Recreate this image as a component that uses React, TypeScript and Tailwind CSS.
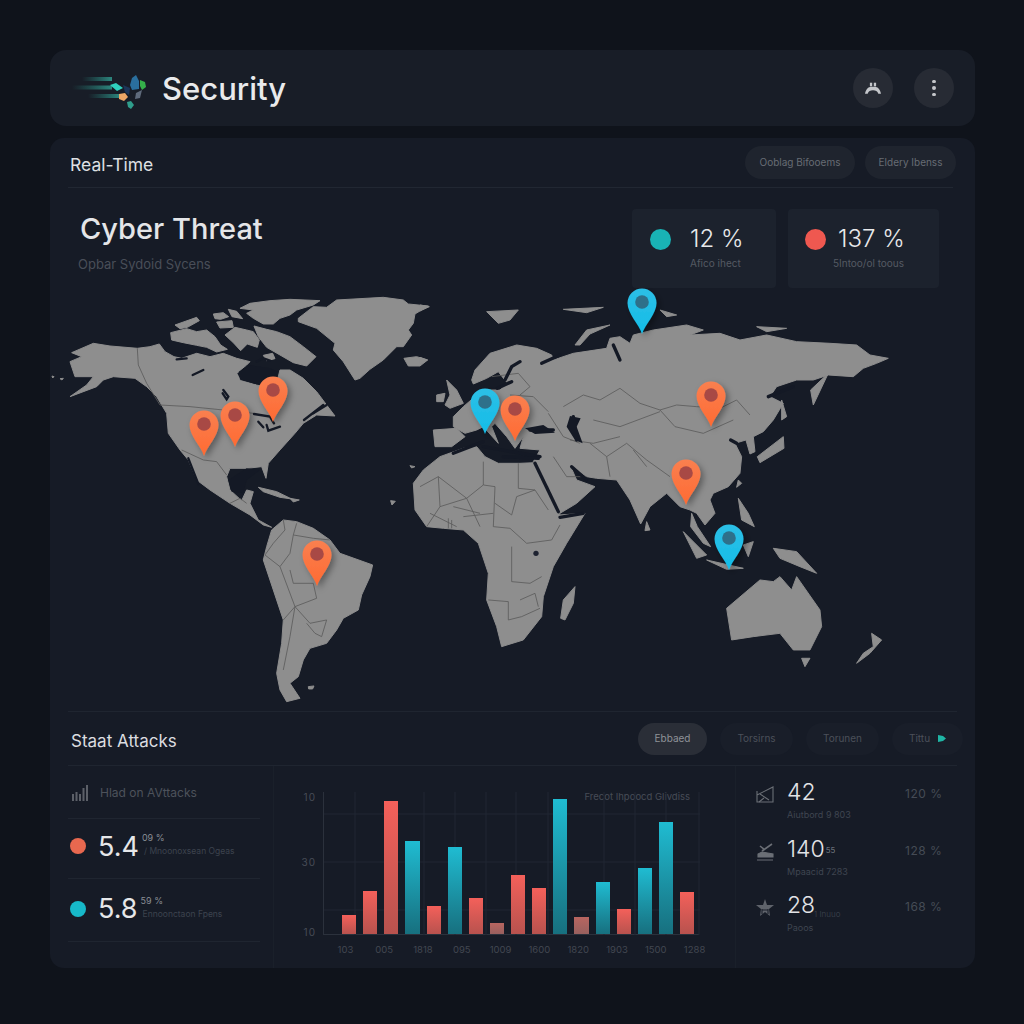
const font = "font-['Inter','Liberation_Sans',sans-serif]";

const bars = [
  { h: 19, c: "r" }, { h: 43, c: "r" }, { h: 133, c: "r" }, { h: 93, c: "t" }, { h: 28, c: "r" }, { h: 87, c: "t" },
  { h: 36, c: "r" }, { h: 11, c: "m" }, { h: 59, c: "r" }, { h: 46, c: "r" }, { h: 135, c: "t" }, { h: 17, c: "m" },
  { h: 52, c: "t" }, { h: 25, c: "r" }, { h: 66, c: "t" }, { h: 112, c: "t" }, { h: 42, c: "r" },
];

const barClass: Record<string, string> = {
  r: "bg-gradient-to-b from-[#f4605a] to-[#b8524e]",
  t: "bg-gradient-to-b from-[#1fbcd2] to-[#17707f]",
  m: "bg-gradient-to-b from-[#b86560] to-[#98605e]",
};

const pins = [
  { x: 204, y: 425, k: "o" }, { x: 235, y: 416, k: "o" }, { x: 273, y: 391, k: "o" }, { x: 317, y: 555, k: "o" },
  { x: 485, y: 403, k: "c" }, { x: 515, y: 410, k: "o" }, { x: 711, y: 396, k: "o" }, { x: 686, y: 474, k: "o" },
  { x: 729, y: 539, k: "c" }, { x: 642, y: 303, k: "c" },
];

// traced from the picture, coordinates are 3x crops
const westLand = [
  "M65,188 L130,160 L180,168 L262,175 L300,170 L328,162 L345,185 L372,200 L395,205 L440,190 L480,200 L520,190 L560,205 L600,215 L590,225 L565,245 L570,270 L620,285 L650,292 L680,280 L690,240 L720,240 L760,265 L800,305 L830,345 L855,378 L800,375 L760,400 L735,430 L690,480 L655,520 L648,565 L635,530 L590,535 L540,535 L530,560 L540,600 L575,632 L590,600 L610,605 L600,640 L625,690 L665,712 L640,705 L600,675 L540,640 L480,600 L440,570 L415,510 L390,480 L355,430 L350,370 L320,320 L290,290 L255,265 L190,260 L160,270 L140,290 L60,320 L110,285 L130,260 L75,260 L60,215 L95,200 Z",
  "M612,108 L650,118 L680,125 L720,140 L760,170 L798,200 L770,228 L730,218 L690,195 L650,172 L625,140 Z",
  "M362,128 L410,116 L440,125 L470,120 L495,140 L512,165 L532,178 L500,186 L470,172 L440,166 L400,158 L365,150 Z",
  "M375,105 L440,82 L448,92 L412,112 L390,116 Z",
  "M490,72 L520,68 L536,80 L512,88 L495,86 Z",
  "M500,96 L546,92 L550,112 L510,114 Z",
  "M535,58 L560,64 L578,86 L546,80 Z",
  "M600,40 L660,32 L720,28 L810,32 L790,45 L740,60 L720,75 L690,85 L670,102 L640,102 L610,85 L590,70 L610,60 L570,55 Z",
  "M555,112 L590,120 L610,125 L628,150 L622,172 L592,162 L572,182 L550,158 L525,135 Z",
  "M640,196 L668,190 L675,206 L650,212 Z",
  "M745,85 L790,50 L830,52 L860,30 L1000,22 L1060,30 L1075,42 L1135,48 L1095,72 L1090,100 L1075,120 L1085,135 L1060,170 L1040,170 L1000,210 L960,238 L930,265 L915,270 L880,215 L850,180 L855,160 L800,115 L745,95 Z",
  "M1062,205 L1100,200 L1133,210 L1110,228 L1075,228 Z",
  "M665,720 L700,690 L740,695 L790,715 L840,750 L870,790 L968,825 L960,860 L935,915 L925,960 L880,985 L860,1020 L830,1060 L780,1075 L760,1110 L745,1160 L720,1180 L750,1225 L710,1235 L690,1200 L680,1150 L695,1060 L700,990 L670,900 L640,810 L650,770 Z",
  "M625,592 L680,605 L725,627 L690,622 L640,605 Z",
  "M720,625 L748,630 L730,636 Z",
  "M775,1190 L792,1188 L788,1197 L776,1197 Z",
  "M6,258 L12,260 L8,264 Z",
  "M30,266 L40,265 L36,270 Z",
  "M1080,527 L1095,530 L1085,534 Z",
  "M1022,632 L1036,634 L1026,645 Z",
];

const westLines = [
  "M262,175 L265,225 L290,280 L330,345 L420,350 L520,360 L610,370",
  "M395,480 L460,510 L500,515 L530,555",
  "M540,640 L570,625 L590,640",
  "M700,690 L705,720 L670,760 L645,795 L690,830 L735,950 L700,990",
  "M740,700 L730,735 L790,745 L840,750",
  "M690,830 L720,790 L730,735",
  "M735,950 L800,925 L790,880 L730,880 L720,840",
  "M735,950 L780,1000 L830,990 L815,1040 L795,1030 L770,1000",
  "M735,950 L720,1040 L700,1140",
];

const westDark = [
  "M415,505 L445,582",
  "M520,300 L535,320 L530,328 L518,310",
  "M612,372 L660,380 L672,400",
  "M625,395 L640,412",
  "M650,405 L655,422 L690,410",
  "M762,390 L820,345",
  "M380,208 L410,205",
  "M428,255 L460,240",
  "M620,215 L640,205 L660,212",
  "M790,370 L830,345",
];

const eastLand = [
  "M-20,610 L10,570 L60,530 L130,505 L170,500 L195,530 L235,550 L300,550 L345,548 L380,620 L420,705 L495,700 L440,790 L400,860 L370,950 L365,1010 L310,1080 L245,1100 L230,1040 L200,960 L205,880 L175,790 L130,750 L70,745 L20,740 L-15,690 Z",
  "M40,450 L110,445 L135,470 L95,500 L45,500 Z",
  "M155,300 L165,270 L210,220 L290,195 L350,205 L395,225 L400,240 L460,220 L560,205 L570,175 L600,170 L630,190 L640,165 L700,150 L800,135 L850,150 L810,165 L900,160 L960,180 L1040,165 L1130,185 L1230,190 L1310,195 L1350,225 L1405,235 L1370,250 L1330,265 L1300,290 L1225,285 L1180,300 L1130,300 L1070,320 L1050,350 L1090,370 L1060,420 L1030,455 L1000,470 L1005,515 L990,522 L978,480 L945,490 L965,530 L960,580 L925,620 L880,640 L870,660 L885,700 L855,735 L830,700 L810,690 L780,680 L740,640 L690,680 L662,732 L630,660 L590,600 L530,595 L500,590 L450,555 L470,600 L525,620 L470,670 L420,700 L385,620 L340,545 L360,510 L300,505 L310,470 L285,505 L260,470 L225,430 L215,440 L235,490 L190,440 L170,450 L135,460 L100,440 L100,410 L130,380 L165,350 L200,330 L240,330 L262,310 L235,275 L200,295 L160,312 Z",
  "M815,700 L832,740 L872,800 L850,790 L812,740 Z",
  "M80,300 L110,330 L130,370 L90,385 L75,375 L90,345 Z",
  "M50,345 L75,340 L70,365 L50,365 Z",
  "M200,95 L295,90 L270,120 L235,130 Z",
  "M465,195 L500,150 L570,135 L510,162 L480,195 Z",
  "M430,88 L550,82 L500,98 Z",
  "M720,90 L770,105 L740,110 Z",
  "M1010,140 L1100,145 L1040,155 Z",
  "M1225,280 L1180,375 L1172,330 Z",
  "M1085,360 L1100,410 L1085,420 Z",
  "M1012,530 L1090,470 L1092,505 L1020,548 Z",
  "M955,600 L965,610 L950,622 Z",
  "M955,655 L985,700 L1003,740 L965,720 Z",
  "M790,755 L860,825 L830,835 Z",
  "M860,840 L970,865 L920,868 Z",
  "M970,795 L1000,785 L985,830 Z",
  "M1060,805 L1130,815 L1190,880 L1140,860 L1080,835 Z",
  "M920,985 L1020,900 L1060,905 L1080,890 L1115,930 L1130,890 L1200,990 L1205,1040 L1170,1110 L1120,1110 L1080,1060 L1000,1070 L935,1080 Z",
  "M1145,1135 L1170,1135 L1155,1160 Z",
  "M1355,1060 L1385,1080 L1350,1120 L1310,1150 L1330,1120 L1360,1100 Z",
  "M465,920 L460,970 L435,1020 L422,1015 L430,960 Z",
  "M680,725 L690,750 L675,752 Z",
  "M0,75 L28,80 L0,93 Z",
  "M0,232 L22,240 L0,252 Z",
];

const eastLines = [
  "M430,380 L490,345 L540,360 L600,325 L660,370 L720,390 L770,375 L830,380 L900,385 L950,360 L990,405",
  "M720,390 L765,440 L850,460 L940,420",
  "M520,420 L600,440 L720,395",
  "M510,490 L560,530 L620,490 L680,540 L750,590",
  "M560,530 L570,590",
  "M640,510 L680,560",
  "M450,480 L520,490 L600,470",
  "M55,590 L140,655 L190,615 L225,620 L220,740",
  "M190,545 L190,615",
  "M295,550 L295,625 L345,630",
  "M225,670 L275,705 L290,650 L345,630 L385,690",
  "M0,620 L55,590 L60,680 L20,740",
  "M60,680 L140,655 L180,740",
  "M220,740 L270,745 L320,790 L395,780 L420,735",
  "M275,800 L275,905 L330,910 L365,890",
  "M205,960 L265,965 L265,1020 L305,1010 L360,985",
  "M300,960 L345,940 L355,980",
  "M385,400 L430,470 L480,490",
  "M400,530 L440,590 L500,590",
  "M215,290 L295,280 L330,320 L300,345",
  "M270,345 L340,350 L385,395",
  "M30,700 L110,740 M85,715 L85,745 M95,720 L95,745",
  "M100,680 L180,700 M130,710 L220,700",
];

const eastDark = [
  "M345,550 L415,695",
  "M420,712 L490,700",
  "M100,520 L190,485 M190,500 L360,530",
  "M250,530 L355,535",
  "M255,300 L275,260 L300,245",
  "M232,325 L275,305",
  "M330,450 L400,450",
  "M460,410 L470,480",
  "M455,560 L500,600",
  "M580,195 L600,240",
  "M365,250 L420,225",
  "M932,480 L950,490",
  "M1045,350 L1120,320",
];

function Pin({ x, y, k }: { x: number; y: number; k: string }) {
  const orange = k === "o";
  return (
    <g transform={`translate(${x} ${y})`} filter="url(#pinShadow)">
      <path
        d="M0,31 C-3,21 -14.5,11 -14.5,0 A14.5,14.5 0 1 1 14.5,0 C14.5,11 3,21 0,31 Z"
        fill={orange ? "url(#pinOrange)" : "url(#pinCyan)"}
      />
      <circle cx="0" cy="-1" r="6.8" fill={orange ? "#a84a44" : "#2d6f8a"} />
    </g>
  );
}

function WorldMap() {
  return (
    <svg viewBox="50 290 925 420" className="block w-[925px] h-[420px] overflow-visible">
      <defs>
        <linearGradient id="pinOrange" x1="0" y1="0" x2="0" y2="1">
          <stop offset="0" stopColor="#f98050" />
          <stop offset="1" stopColor="#ff6a32" />
        </linearGradient>
        <linearGradient id="pinCyan" x1="0" y1="0" x2="0" y2="1">
          <stop offset="0" stopColor="#2cbfe6" />
          <stop offset="1" stopColor="#14bde8" />
        </linearGradient>
        <filter id="pinShadow" x="-60%" y="-40%" width="220%" height="180%">
          <feDropShadow dx="3" dy="3" stdDeviation="3" floodColor="#000" floodOpacity="0.35" />
        </filter>
      </defs>
      <g transform="translate(50 290) scale(0.3333)">
        {westLand.map((d) => (
          <path key={d} d={d} fill="#8e8e8e" stroke="#8e8e8e" strokeWidth="3" strokeLinejoin="round" />
        ))}
        {westLines.map((d) => (
          <path key={d} d={d} fill="none" stroke="#5c5c5c" strokeWidth="2.5" />
        ))}
        {westDark.map((d) => (
          <path key={d} d={d} fill="none" stroke="#141925" strokeWidth="7" strokeLinecap="round" />
        ))}
        <path d="M562,250 L600,225 L660,235 L685,245 L665,285 L620,283 L572,270 Z" fill="#141925" />
        <path d="M535,570 L590,535 L630,540 L590,570 L580,610 L545,605 Z" fill="#141925" />
      </g>
      <g transform="translate(420 280) scale(0.3333)">
        {eastLand.map((d) => (
          <path key={d} d={d} fill="#8e8e8e" stroke="#8e8e8e" strokeWidth="3" strokeLinejoin="round" />
        ))}
        {eastLines.map((d) => (
          <path key={d} d={d} fill="none" stroke="#5c5c5c" strokeWidth="2.5" />
        ))}
        {eastDark.map((d) => (
          <path key={d} d={d} fill="none" stroke="#141925" strokeWidth="10" strokeLinecap="round" />
        ))}
        <path d="M315,445 L370,435 L405,458 L345,462 Z" fill="#141925" />
        <path d="M450,408 L482,415 L470,440 L488,490 L465,480 L440,440 Z" fill="#141925" />
        <circle cx="348" cy="820" r="8" fill="#1d2230" />
      </g>
      {pins.map((p) => (
        <Pin key={`${p.x}-${p.y}`} x={p.x} y={p.y} k={p.k} />
      ))}
    </svg>
  );
}

function Logo() {
  return (
    <svg viewBox="0 0 80 40" className="w-[80px] h-[40px] overflow-visible">
      <defs>
        <linearGradient id="speed" x1="0" y1="0" x2="1" y2="0">
          <stop offset="0" stopColor="#2a9d8f" stopOpacity="0" />
          <stop offset="1" stopColor="#35b5a5" stopOpacity="0.7" />
        </linearGradient>
      </defs>
      <rect x="10" y="9" width="30" height="4" fill="url(#speed)" />
      <rect x="0" y="17.5" width="40" height="4" fill="url(#speed)" />
      <rect x="16" y="26" width="32" height="4" fill="url(#speed)" />
      <path d="M38,17 L44,15 L51,20 L45,23 Z" fill="#2fd0bd" />
      <path d="M47,26 L53,25 L56,29 L52,33 L47,31 Z" fill="#eda766" />
      <path d="M51,17 L58,20 L57,27 L53,24 Z" fill="#1c3558" />
      <path d="M60,10 L64,7 L67,13 L67,21 L60,22 L58,17 Z" fill="#2a6f9e" />
      <path d="M68,12 L73,14 L74,19 L70,22 L68,18 Z" fill="#35b04a" />
      <path d="M64,25 L70,22 L68,30 L63,31 Z" fill="#5f6b7c" />
      <path d="M55,34 L59,33 L62,37 L59,41 L56,39 Z" fill="#2f9e8c" />
    </svg>
  );
}

function PairIcon() {
  return (
    <svg viewBox="0 0 18 14" className="w-[16px] h-[13px]" fill="#c4c6ca">
      <path d="M0,13 C1,8 3,6 6,5 L12,5 C15,6 17,8 18,13 L15,13 C14,10 12,9 9,9 C6,9 4,10 3,13 Z" />
      <rect x="5.5" y="0.5" width="2.6" height="4" />
      <rect x="9.9" y="0.5" width="2.6" height="4" />
    </svg>
  );
}

function RowIcon({ kind }: { kind: number }) {
  return (
    <svg viewBox="0 0 18 18" className="w-[18px] h-[18px]" fill="none" stroke="#6b6f76" strokeWidth="1.1">
      {kind === 0 && (
        <>
          <path d="M1,5 V16 H17 V1 L1,9" />
          <path d="M4,8 L13,14 M8,12 L3,16" />
        </>
      )}
      {kind === 1 && (
        <>
          <path d="M1,17 H17 M2,14 H17 V11 L6,9 L2,11 Z" fill="#6b6f76" />
          <path d="M6,8 L16,1 M4,3 L9,7" strokeWidth="1.6" />
        </>
      )}
      {kind === 2 && (
        <>
          <path d="M9,0 L11,6 L18,6 L13,10 L14,17 L9,13 L4,17 L5,10 L0,6 L7,6 Z" fill="#5f636b" stroke="none" />
          <path d="M6,10 V15 M12,10 V15 M6,11 H12" stroke="#1a1f2a" />
        </>
      )}
    </svg>
  );
}

function StatCard({ dot, value, label, width, dotLeft, gap, labelShift }: { dot: string; value: string; label: string; width: string; dotLeft: string; gap: string; labelShift: string }) {
  return (
    <div className={`${width} h-[79px] rounded-[4px] bg-[#1c222d] flex items-start`}>
      <div className={`${dot} ${dotLeft} w-[21px] h-[21px] rounded-full mt-[20px]`} />
      <div className={`${gap} mt-[16px]`}>
        <div className="text-[24px] leading-[28px] font-light text-[#e8e9eb] whitespace-nowrap">{value}</div>
        <div className={`${labelShift} text-[10px] leading-[12px] mt-[4px] text-[#555a63] whitespace-nowrap`}>{label}</div>
      </div>
    </div>
  );
}

function AttackRow({ dot, value, sup, sub, h }: { dot: string; value: string; sup: string; sub: string; h: string }) {
  return (
    <div className={`${h} flex items-center border-b border-[#1f2530]`}>
      <div className={`${dot} w-[16px] h-[16px] rounded-full ml-[2px]`} />
      <div className="ml-[12px] text-[27px] leading-none font-normal text-[#e6e7e9]">{value}</div>
      <div className="ml-[3px] -mt-[3px]">
        <div className="text-[9px] leading-[11px] text-[#8a8e95]">{sup}</div>
        <div className="text-[8.5px] leading-[12px] mt-[2px] ml-[2px] text-[#3d434e] whitespace-nowrap">{sub}</div>
      </div>
    </div>
  );
}

function ThreatRow({ kind, value, sup, note, sub, side, h }: { kind: number; value: string; sup?: string; note?: string; sub: string; side: string; h: string }) {
  return (
    <div className={`${h} flex items-start`}>
      <div className="mt-[9px] w-[18px]">
        <RowIcon kind={kind} />
      </div>
      <div className="ml-[13px] w-[118px]">
        <div className="text-[23px] leading-[30px] font-light text-[#e2e3e6] relative">
          {value}
          {sup && <sup className="text-[8px] text-[#8a8e95] ml-[1px]">{sup}</sup>}
          {note && <span className="absolute left-[27px] top-[19px] text-[8px] leading-[10px] text-[#3f4550]">{note}</span>}
        </div>
        <div className="text-[9px] leading-[12px] mt-[2px] text-[#3f4550] whitespace-nowrap">{sub}</div>
      </div>
      <div className="mt-[8px] text-[12px] tracking-[0.5px] text-[#454b55] whitespace-nowrap">{side}</div>
    </div>
  );
}

export default function App() {
  return (
    <div className={`${font} w-[1024px] h-[1024px] overflow-hidden bg-[#0f131b] pt-[50px] pl-[50px]`}>
      <header className="w-[925px] h-[76px] rounded-[16px] bg-[#181d27] flex items-center pl-[22px] pr-[21px]">
        <Logo />
        <div className="ml-[10px] mt-[3px] text-[31px] font-medium text-[#e9eaec]">Security</div>
        <div className="ml-auto flex gap-[21px]">
          <div className="w-[40px] h-[40px] rounded-full bg-[#272b34] flex items-center justify-center">
            <PairIcon />
          </div>
          <div className="w-[40px] h-[40px] rounded-full bg-[#272b34] flex flex-col items-center justify-center gap-[3px]">
            <span className="w-[3.5px] h-[3.5px] rounded-full bg-[#c4c6ca]" />
            <span className="w-[3.5px] h-[3.5px] rounded-full bg-[#c4c6ca]" />
            <span className="w-[3.5px] h-[3.5px] rounded-full bg-[#c4c6ca]" />
          </div>
        </div>
      </header>

      <main className="w-[925px] h-[830px] mt-[12px] rounded-[14px] bg-[#161b26]">
        <div className="ml-[18px] mr-[22px] h-[50px] flex items-center border-b border-[#212732]">
          <div className="ml-[2px] mt-[5px] text-[17.5px] text-[#dfe0e3]">Real-Time</div>
          <div className="ml-auto -mr-[3px] flex gap-[10px] text-[10px] text-[#676c74]">
            <div className="w-[110px] h-[33px] rounded-full bg-[#1f242e] flex items-center justify-center">Ooblag Bifooems</div>
            <div className="w-[91px] h-[33px] rounded-full bg-[#1f242e] flex items-center justify-center">Eldery Ibenss</div>
          </div>
        </div>

        <div className="h-[102px] flex pr-[36px]">
          <div className="pl-[30px]">
            <div className="mt-[21px] text-[29px] leading-[40px] font-medium text-[#e4e5e8]">Cyber Threat</div>
            <div className="ml-[-2px] mt-[7px] text-[13px] leading-[16px] text-[#494e58]">Opbar Sydoid Sycens</div>
          </div>
          <div className="ml-auto pt-[21px] flex gap-[12px]">
            <StatCard dot="bg-[#19b3b5]" value="12 %" label="Afico ihect" width="w-[144px]" dotLeft="ml-[18px]" gap="ml-[19px]" labelShift="ml-0" />
            <StatCard dot="bg-[#ef5850]" value="137 %" label="5Intoo/ol toous" width="w-[151px]" dotLeft="ml-[17px]" gap="ml-[12px]" labelShift="-ml-[5px]" />
          </div>
        </div>

        <WorldMap />

        <div className="mx-[18px] mt-[1px] h-[55px] flex items-center border-t border-b border-[#1f2530]">
          <div className="ml-[3px] mt-[6px] text-[17px] text-[#dcdde0]">Staat Attacks</div>
          <div className="ml-auto -mr-[6px] flex gap-[13px] text-[10px] text-[#4b5059]">
            <div className="w-[69px] h-[32px] rounded-full bg-[#2a2e37] text-[#8f9298] flex items-center justify-center">Ebbaed</div>
            <div className="w-[73px] h-[32px] rounded-full bg-[#191e29] flex items-center justify-center">Torsirns</div>
            <div className="w-[73px] h-[32px] rounded-full bg-[#191e29] flex items-center justify-center">Torunen</div>
            <div className="w-[71px] h-[32px] rounded-full bg-[#191e29] flex items-center justify-center gap-[8px]">
              Tittu
              <svg viewBox="0 0 8 7" className="w-[8px] h-[7px]">
                <path d="M0,0 L5,1 L8,3.5 L5,6 L0,7 Z" fill="#1fb5a5" />
              </svg>
            </div>
          </div>
        </div>

        <div className="flex h-[202px]">
          <div className="w-[223px] pl-[18px] pr-[13px]">
            <div className="h-[53px] flex items-center border-b border-[#1f2530]">
              <svg viewBox="0 0 16 16" className="ml-[4px] mt-[2px] w-[16px] h-[16px]" fill="#5c6068">
                <rect x="0" y="9" width="2" height="7" />
                <rect x="3.5" y="7" width="2" height="9" />
                <rect x="7" y="9" width="2" height="7" />
                <rect x="10.5" y="3" width="2" height="13" />
                <rect x="14" y="0" width="2" height="16" />
              </svg>
              <div className="ml-[12px] mt-[2px] text-[12px] text-[#4d525b]">Hlad on AVttacks</div>
            </div>
            <AttackRow dot="bg-[#e8684f]" value="5.4" sup="09 %" sub="/ Mnoonoxsean Ogeas" h="h-[60px] pb-[5px]" />
            <AttackRow dot="bg-[#17b9c9]" value="5.8" sup="59 %" sub="Ennoonctaon Fpens" h="h-[63px] pb-[3px]" />
          </div>

          <div className="w-[462px] border-l border-[#1a202a] pt-[26px] relative">
            <div className="absolute right-[45px] top-[24px] text-[9.5px] text-[#474c56] whitespace-nowrap">Frecot Ihpoocd Glivdiss</div>
            <div className="flex">
              <div className="w-[42px] text-[10px] leading-[10px] text-right text-[#474c56] tracking-[1px]">
                <div>10</div>
                <div className="mt-[55px]">30</div>
                <div className="mt-[60px]">10</div>
              </div>
              <div className="ml-[7px] w-[376px] h-[143px] relative border-l border-b border-[#2b313c] pl-[18px] flex items-end">
                <svg viewBox="0 0 376 143" className="absolute inset-0 w-[376px] h-[143px]" stroke="#212733" fill="none">
                  <path d="M0,22H376M0,70H376M0,118H376" />
                  <path d="M31,0V143M100,0V143M131,0V143M162,0V143M192,0V143M224,0V143M280,0V143M311,0V143M342,0V143M375,0V143" />
                </svg>
                <div className="relative w-[352px] h-[143px] flex items-end gap-[7px]">
                  {bars.map((b, i) => (
                    <div key={i} className={`flex-1 ${barClass[b.c]}`} style={{ height: b.h }} />
                  ))}
                </div>
              </div>
            </div>
            <div className="ml-[52px] mt-[6px] flex text-[9.5px] text-[#424751]">
              {["103", "005", "1818", "095", "1009", "1600", "1820", "1903", "1500", "1288"].map((t) => (
                <span key={t} className="w-[38.8px] text-center">{t}</span>
              ))}
            </div>
          </div>

          <div className="flex-1 border-l border-[#1a202a] pl-[20px] pt-[11px]">
            <ThreatRow kind={0} value="42" sub="Aiutbord 9 803" side="120 %" h="h-[57px]" />
            <ThreatRow kind={1} value="140" sup="55" sub="Mpaacid 7283" side="128 %" h="h-[56px]" />
            <ThreatRow kind={2} value="28" note="1 Inuuo" sub="Paoos" side="168 %" h="h-[56px]" />
          </div>
        </div>
      </main>
    </div>
  );
}
